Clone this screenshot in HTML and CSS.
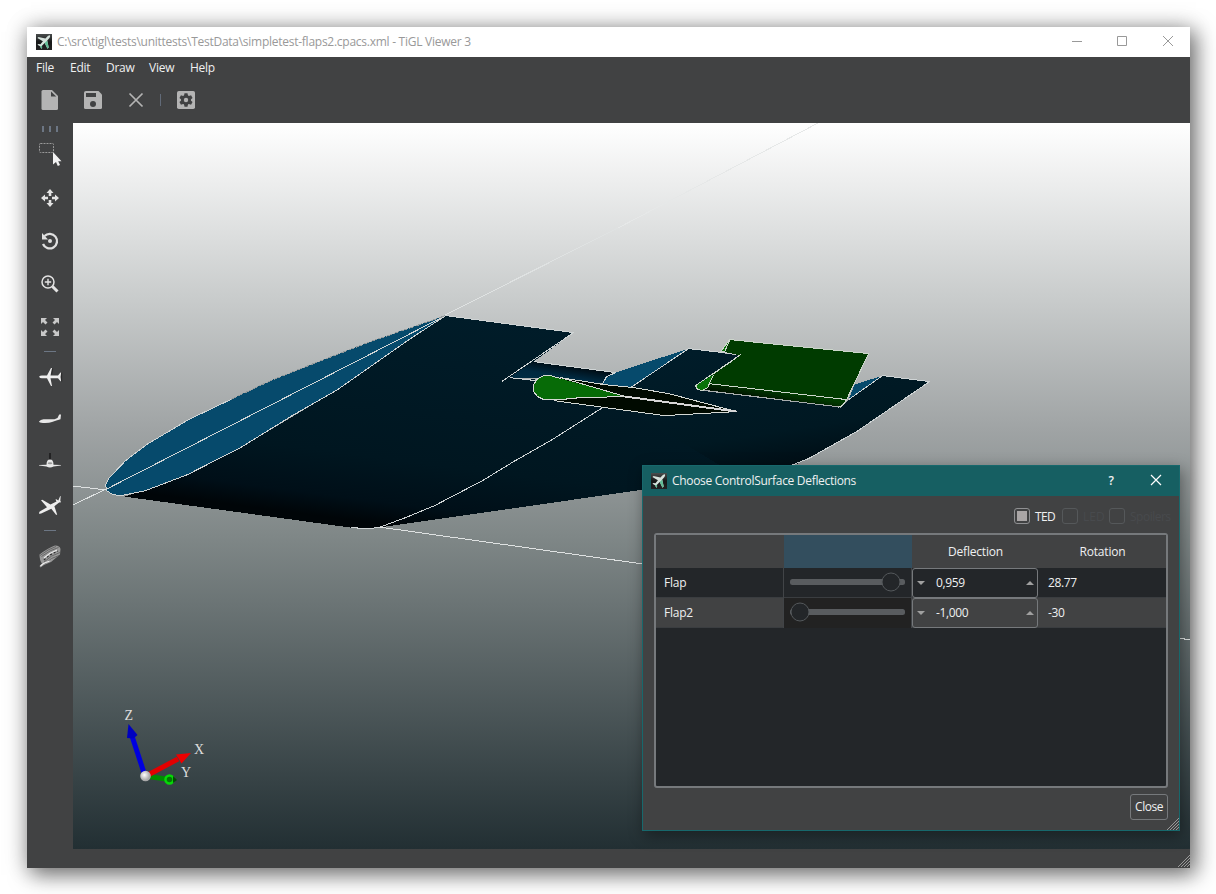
FILE: index.html
```html
<!DOCTYPE html>
<html lang="en">
<head>
<meta charset="utf-8">
<title>TiGL Viewer 3</title>
<link rel="stylesheet" href="styles.css">
</head>
<body>
<svg class="defs" width="0" height="0">
  <defs>
    <linearGradient id="appbg" x1="0" y1="0" x2="0" y2="1"><stop offset="0" stop-color="#4a4d4d"/><stop offset=".5" stop-color="#161818"/><stop offset="1" stop-color="#222"/></linearGradient>
    <symbol id="app" viewBox="0 0 16 16">
      <rect width="16" height="16" fill="url(#appbg)"/>
      <path d="M13.800 1.200C13 .9 12 1.700 10.900 2.900L9.400 4.500 2.500 3 1.400 4 6.900 7.200 4.500 10.200 2.300 10 1.500 10.800 4 12.200 5.300 14.800 6.100 14 6 11.700 8.700 9 11.500 14.800 12.700 13.600 11.200 6.500 12.600 4.900C13.900 3.500 14.500 2 13.800 1.200Z" fill="#d5e2dc"/>
      <path d="M8.700 9 11.500 14.800 12.700 13.600 11.200 6.500M4 12.200 5.300 14.800 6.100 14 6 11.700Z" fill="#62bd96"/>
    </symbol>
  </defs>
</svg>
<main class="window">
  <header class="titlebar">
    <svg class="app-icon"><use href="#app"/></svg>
    <span class="title">C:\src\tigl\tests\unittests\TestData\simpletest-flaps2.cpacs.xml - TiGL Viewer 3</span>
    <svg class="controls" viewBox="0 0 120 30" fill="none" stroke="#999"><path d="M9 14.500h10M54.500 9.500h9v9h-9zM100 9l10 10M110 9l-10 10"/></svg>
  </header>
  <nav class="menu"><span class="m1">File</span><span class="m2">Edit</span><span class="m3">Draw</span><span class="m4">View</span><span>Help</span></nav>
  <div class="toolbar">
    <svg viewBox="0 0 28 28"><path d="M7 4h9l6 6v12.500q0 1.500-1.500 1.500H7Q5.500 24 5.500 22.500V5.500Q5.500 4 7 4z" fill="#b4b4b4"/><path d="M15 5.500v5h5.200" fill="#414243"/></svg>
    <svg viewBox="0 0 28 28"><path d="M7 5h12.500l3.500 3.500V21.500Q23 23 21.500 23H6.500Q5 23 5 21.500V6.500Q5 5 7 5z" fill="#b4b4b4"/><path d="M7 7h10v4H7z" fill="#414243"/><circle cx="14" cy="18" r="3" fill="#414243"/></svg>
    <svg viewBox="0 0 28 28"><path d="M7.500 7.500l13 13M20.500 7.500l-13 13" stroke="#b4b4b4" stroke-width="1.700"/></svg>
    <i class="vsep"></i>
    <svg viewBox="0 0 28 28"><rect x="5" y="5" width="18" height="18" rx="1.800" fill="#b4b4b4"/><g fill="#414243"><circle cx="14" cy="14" r="5"/><path id="t" d="M12.500 7.300h3l.6 3h-4.200zM12.500 20.700h3l.6-3h-4.200z"/><use href="#t" transform="rotate(60 14 14)"/><use href="#t" transform="rotate(120 14 14)"/></g><circle cx="14" cy="14" r="2.200" fill="#b4b4b4"/></svg>
  </div>
  <div class="body">
    <aside class="tools">
      <div class="grip"><i></i><i></i><i></i></div>
      <svg viewBox="0 0 28 28"><rect x="3.500" y="2.500" width="14" height="9" rx="1" fill="none" stroke="#999" stroke-dasharray="2 1"/><path d="M17 11v12.500l3-2.500 1.800 4 2.200-1-1.800-3.800H25.500z" fill="#f2f2f2"/></svg>
      <svg viewBox="0 0 28 28"><path id="arr" d="M14 5l3.500 4h-2.200v3h-2.600v-3h-2.200z" fill="#e3e3e3"/><use href="#arr" transform="rotate(90 14 14)"/><use href="#arr" transform="rotate(180 14 14)"/><use href="#arr" transform="rotate(270 14 14)"/></svg>
      <svg viewBox="0 0 28 28"><path d="M8.500 9A7.300 7.300 0 1 1 7 17" fill="none" stroke="#e0e0e0" stroke-width="2.300"/><path d="M6 6v6.500h6z" fill="#e0e0e0"/><circle cx="14" cy="14" r="2" fill="#e0e0e0"/></svg>
      <svg viewBox="0 0 28 28"><circle cx="12" cy="12" r="6" fill="none" stroke="#e3e3e3" stroke-width="1.500"/><path d="M12 8.800v6.400M8.800 12h6.400" stroke="#e3e3e3" stroke-width="1.400"/><path d="M16.500 16.500l5 5" stroke="#e3e3e3" stroke-width="3"/></svg>
      <svg viewBox="0 0 28 28"><path id="cor" d="M5 5h6L9 7l2.500 2.500-2 2L7 9 5 11z" fill="#c8c8c8"/><use href="#cor" transform="rotate(90 14 14)"/><use href="#cor" transform="rotate(180 14 14)"/><use href="#cor" transform="rotate(270 14 14)"/></svg>
      <i class="hsep"></i>
      <svg viewBox="0 0 28 28"><path d="M3 13.800q1-1.300 3-1.300h5L15 5h1l-1.500 7.500h7.500L24.500 9.500h.7L24.500 14l.7 4.300h-.7L22 15.300h-7.500L16 23h-1l-4-7.700H6q-2 0-3-1.500z" fill="#eee"/><path d="M25.700 9.500v9M16.700 5.500l-1 6" stroke="#222" stroke-width=".8"/></svg>
      <svg viewBox="0 0 28 28"><path d="M3 15.500q1.500-2 4.500-2.300h11q2-.7 3-1.200L23.200 8.500H25l-.5 4.800q-4 1-8.500 2.700-3 1.300-9 1-4-.5-4-1.500z" fill="#e8e8e8"/></svg>
      <svg viewBox="0 0 28 28"><path d="M14 11V4" stroke="#181818" stroke-width="1.500"/><path d="M3 16l7.500-.2Q10.500 10.500 14 10.500T17.500 15.800L25 16v.6l-7.500.8q-3.500 2-7 0L3 16.600z" fill="#e8e8e8"/><ellipse cx="14" cy="14.200" rx="2.300" ry="1" fill="#999"/></svg>
      <svg viewBox="0 0 28 28"><path d="M3 21.500q-.3-1.500 2-2.700l6-3.500L5 8.300 6.300 7.800l8.200 4.800 6-3-1-2 .8-.3 2 1.200L24.200 4l.5.300-.4 4.400.8 1.500-2 .4-4.700 3.700 2.800 8.500-1.200-.1-4.700-6-8.500 4Q4 22.500 3 21.500z" fill="#eee"/></svg>
      <i class="hsep"></i>
      <svg viewBox="0 0 28 28"><path d="M3.500 12.500Q12 6 19 3.500q5 0 5.500 3.500l-.5 5.500-9 7.500-7 3-3.500 2.500-1-1.500 2.500-2.500q-2.500-3-2.500-9z" fill="#999"/><path d="M4 13.500q9-7 16-9M5.500 14.500q9-7 17-9M8 20q7-7 16-9.500M9 21.500q6-6 14-8" fill="none" stroke="#5a5a5a" stroke-width=".8"/><path d="M8 18Q14 12 22 9" fill="none" stroke="#2d2d2d" stroke-width="1.300" stroke-dasharray="2 2"/><path d="M8 16Q14 10.500 21 8M4.500 24l3-2.500 6-2.500" fill="none" stroke="#eee" stroke-width="1.100"/></svg>
    </aside>
    <svg class="scene" viewBox="73 123 1117 726">
      <defs>
        <linearGradient id="wing" gradientUnits="userSpaceOnUse" x1="430" y1="310" x2="402" y2="526"><stop offset="0" stop-color="#001c29"/><stop offset=".7" stop-color="#001620"/><stop offset=".9" stop-color="#000f18"/><stop offset="1" stop-color="#000508"/></linearGradient>
        <linearGradient id="right" gradientUnits="userSpaceOnUse" x1="700" y1="350" x2="720" y2="480"><stop offset="0" stop-color="#001c29"/><stop offset=".7" stop-color="#001822"/><stop offset="1" stop-color="#000d14"/></linearGradient>
        <linearGradient id="gap" gradientUnits="userSpaceOnUse" x1="562" y1="364" x2="559" y2="383"><stop offset="0" stop-color="#000c14"/><stop offset=".6" stop-color="#002940"/><stop offset="1" stop-color="#002c43"/></linearGradient>
        <linearGradient id="lip" gradientUnits="userSpaceOnUse" x1="777" y1="390" x2="775" y2="401"><stop offset="0" stop-color="#003b00"/><stop offset="1" stop-color="#001300"/></linearGradient>
        <radialGradient id="ball" cx=".4" cy=".4"><stop offset="0" stop-color="#fff"/><stop offset="1" stop-color="#aaa"/></radialGradient>
      </defs>
      <g fill="none" stroke="#dfe2e2" shape-rendering="crispEdges">
        <path d="M445 315L618 228" /><path d="M618 228L820 122" stroke="#e6e8e8"/>
        <path d="M73 486l33 4M73 505l33-16M372 526l271 38M1179 638l11 2"/>
      </g>
      <g shape-rendering="crispEdges" stroke-linejoin="round" transform="translate(.6 .6)">
        <path fill="url(#wing)" d="M445 315L573 332 533 361 509 377 640 387 688 348 740 355 711 375 700 390 840 407 882 375 929 381 856 431 808 458 790 466 643 489 378 527 367 528 350 527 124 496 187 474 240 447 337 389 407 340Z"/>
        <path fill="url(#right)" d="M629 386L688 348 740 355 711 375 700 390 840 407 848 399 882 375 929 381 856 431 808 458 790 466 735 474 620 405Z"/>
        <path fill="url(#gap)" d="M533 361L615 372 602 383 560 378 509 377Z"/>
        <path fill="#064a6c" d="M106 490L105.500 484 108 478 125 460 146 444 188 419 230 399 270 380 318 361 370 341 410 327 445 315 407 340 337 389 290 416 240 447 187 474 145 490 120 495 112 494Z"/>
        <path fill="#064a6c" d="M688 348L615 372 606 377 602 384 630 387ZM882 375L854 384 848 399Z"/>
        <path fill="none" stroke="#cfd4d5" d="M445 315L407 340 337 389 290 416 240 447 187 474 145 490 120 495 112 494 106 490 105 484 108 478 125 460 146 444 188 419 230 399M105 489L445 315M445 315L573 332M573 332L501 381M509 377L535 380M533 361L615 372M615 372L606 376 602 383M630 387L688 348 740 354 711 375M848 399L882 375 929 381 856 431 808 458 790 465M602 407L550 440 513 461 482 480 434 505 405 517 378 527 367 528 350 527"/>
        <path fill="none" stroke="#92999b" stroke-dasharray="6 2" d="M230 399L270 380 318 361 370 341 445 315"/>
        <path fill="#003b00" d="M729 339L868 353 846 399 709 383 711 375 740 355 723 351Z"/>
        <path fill="url(#lip)" d="M709 383L846 399 840 406 702 389Z"/>
        <path fill="#087208" d="M729 340L720 350 724 351ZM713 374L695 385 697 389 702 390 707 387Z"/>
        <path fill="none" stroke="#ccd6cb" d="M720 351L729 339 868 353 846 399 842 405 837 407M724 351L729 340M708 383L846 399M740 354L695 385 697 389 702 390 707 387 713 374M720 351h4"/>
        <path fill="#000a00" d="M553 376L603 384 633 387 668 393 736 411 664 415 555 400Z"/>
        <path fill="#076b07" d="M533 384L537 378 543 375 550 375 560 378 625 396 580 397 560 399 543 399 537 396 533 391Z"/>
        <path fill="none" stroke="#d4d8d3" d="M560 378L550 375 543 375 537 378 533 384 533 391 537 396 543 399 560 399 580 397 625 396 560 377 603 384 633 387 668 393 736 411 664 415 553 400"/>
        <path stroke="#d6d6d6" stroke-width="2" fill="none" d="M625 396L736 411"/>
      </g>
      <g>
        <path d="M145 776L132 736" stroke="#0000df" stroke-width="5"/><path d="M128.500 724l9 11-4 3.500-6.500-.5z" fill="#0000c0"/>
        <path d="M145 776l28 4" stroke="#008c00" stroke-width="5"/><circle cx="169.500" cy="779.500" r="4" fill="#087508" stroke="#06d806" stroke-width="2.500"/><path d="M173 776l4 4-4 3z" fill="#024d02"/>
        <path d="M146 776l32-17" stroke="#e30000" stroke-width="5"/><path d="M191 753l-9.500 10.500-5.500-9z" fill="#e00"/>
        <circle cx="145.500" cy="776" r="5.300" fill="url(#ball)"/>
        <g class="axis"><text x="124.500" y="720">Z</text><text x="194" y="754">X</text><text x="181" y="777">Y</text></g>
      </g>
    </svg>
  </div>
  <footer class="status"><svg class="size" viewBox="0 0 12 12"><path d="M0 12L12 0M3 12l9-9M6 12l6-6M9 12l3-3"/></svg></footer>

  <section class="dialog">
    <header class="dlg-title">
      <svg class="app-icon"><use href="#app"/></svg><span>Choose ControlSurface Deflections</span><b>?</b>
      <svg class="x" viewBox="0 0 12 12"><path d="M1 1l10 10M11 1L1 11" stroke="#fff" stroke-width="1.200"/></svg>
    </header>
    <div class="checks"><i class="box on"></i><span class="ted">TED</span><i class="box"></i><span class="led">LED</span><i class="box"></i><span class="spl">Spoilers</span></div>
    <div class="table">
      <div class="row head"><span></span><span class="sel"></span><span>Deflection</span><span>Rotation</span></div>
      <div class="row">
        <span class="name">Flap</span>
        <span class="slide"><svg viewBox="0 0 127 29"><rect x="6" y="11" width="115" height="6" rx="2.500" fill="#595c5f"/><circle cx="107" cy="14" r="9" fill="#232629" stroke="#54585b"/></svg></span>
        <span class="spin"><i class="down"></i><em>0,959</em><i class="up"></i></span><span class="val">28.77</span>
      </div>
      <div class="row alt">
        <span class="name">Flap2</span>
        <span class="slide"><svg viewBox="0 0 127 29"><rect x="6" y="11" width="115" height="6" rx="2.500" fill="#595c5f"/><circle cx="16" cy="14" r="9" fill="#232629" stroke="#54585b"/></svg></span>
        <span class="spin"><i class="down"></i><em>-1,000</em><i class="up"></i></span><span class="val">-30</span>
      </div>
    </div>
    <div class="actions"><button>Close</button></div>
    <svg class="size" viewBox="0 0 12 12"><path d="M0 12L12 0M3 12l9-9M6 12l6-6M9 12l3-3"/></svg>
  </section>
</main>
</body>
</html>
```
FILE: styles.css
```css
* { box-sizing: border-box; }
html, body { height: 100%; }
body { margin: 0; padding: 27px 26px 26px 27px; background: #fff; overflow: hidden; font: 12px/16px "Open Sans", "Noto Sans", sans-serif; color: #eff0f1; }
.defs { position: absolute; }
.window { position: relative; width: 1163px; height: 841px; background: #414243; display: flex; flex-direction: column; box-shadow: 5px 6px 20px 1px rgba(0,0,0,.5), 0 0 22px rgba(0,0,0,.2); }
.titlebar { height: 30px; flex: none; background: #fff; color: #999; display: flex; align-items: center; padding-left: 9px; }
.app-icon { width: 16px; height: 16px; flex: none; }
.title { margin-left: 5px; white-space: nowrap; letter-spacing: -.26px; }
.controls { width: 120px; height: 30px; margin-left: auto; margin-right: 7px; }
.menu { height: 22px; flex: none; display: flex; align-items: center; padding-left: 9px; letter-spacing: -.25px; }
.m1 { width: 34px; } .m2 { width: 36px; } .m3 { width: 43px; } .m4 { width: 41px; }
.toolbar { height: 44px; flex: none; display: flex; align-items: center; padding: 0 0 2px 9px; gap: 15px; }
.toolbar svg { width: 28px; height: 28px; }
.vsep { width: 1px; height: 12px; background: #616a78; margin: 0 -4px 0 -5px; }
.body { display: flex; height: 726px; flex: none; }
.tools { width: 46px; display: flex; flex-direction: column; align-items: center; }
.tools svg { width: 28px; height: 28px; margin: 8px 0 7px; flex: none; }
.grip { height: 10px; flex: none; display: flex; gap: 5px; padding-top: 3px; }
.grip i { width: 2px; height: 6px; background: #6c7684; }
.hsep { width: 12px; height: 1px; flex: none; background: #6c7684; margin: 3px 0; }
.scene { width: 1117px; height: 726px; background: linear-gradient(#fff, #c9cccc 24%, #a0a4a5 42%, #7f8787 57%, #222f33); }
.axis { font: 14px "Liberation Serif", serif; fill: #ddd; }
.status { height: 18px; display: flex; justify-content: flex-end; align-items: flex-end; }
.size { width: 12px; height: 12px; fill: none; stroke: #999; stroke-width: 1; }
.dialog { position: absolute; left: 615px; top: 438px; width: 538px; height: 366px; border: 1px solid #17686c; background: #414243; box-shadow: 2px 4px 14px rgba(0,0,0,.4); display: flex; flex-direction: column; }
.dlg-title { height: 30px; flex: none; background: #165f62; display: flex; align-items: center; padding: 0 17px 0 8px; }
.dlg-title span { margin-left: 5px; letter-spacing: -.31px; }
.dlg-title b { margin-left: auto; font-weight: 600; }
.x { width: 12px; height: 12px; margin: -2px 0 0 36px; }
.checks { height: 37px; flex: none; display: flex; align-items: center; padding: 2px 11px 0 0; justify-content: flex-end; }
.box { width: 16px; height: 16px; flex: none; border: 1px solid #55585a; border-radius: 3px; }
.box.on { border-color: #8f9092; padding: 2px; background: #aaa6a6 content-box; }
.checks span { padding-top: 2px; }
.ted { width: 20px; margin: 0 7px 0 5px; letter-spacing: -.6px; }
.led, .spl { color: #484a4d; }
.led { width: 26px; margin-left: 5px; }
.spl { width: 38px; margin-left: 5px; letter-spacing: -.5px; }
.table { width: 514px; height: 255px; flex: none; margin-left: 11px; border: 2px solid #76797c; border-radius: 3px; background: #232629; overflow: hidden; }
.row { display: grid; grid-template-columns: 128px 128px 127px 127px; height: 30px; align-items: stretch; border-bottom: 1px solid #3a3d40; }
.head { height: 33px; background: #414243; border: 0; letter-spacing: -.2px; }
.head span { display: flex; align-items: center; justify-content: center; }
.head .sel { background: #334e5e; }
.name { padding: 7px 8px; border-right: 1px solid #414447; letter-spacing: -.25px; }
.slide { border-right: 1px solid #414447; }
.slide svg { display: block; width: 127px; height: 29px; }
.alt { background: #414243; }
.alt .slide { background: #222; }
.spin { display: flex; align-items: center; border: 1px solid #76797c; border-radius: 3px; padding: 0 3px 0 4px; margin-right: 1px; }
.spin em { font-style: normal; margin-left: 11px; flex: 1; letter-spacing: -.35px; }
.down, .up { border: 4px solid transparent; }
.down { border-top-color: #a0a0a0; border-bottom: 0; }
.up { border-bottom-color: #a0a0a0; border-top: 0; }
.val { padding: 7px 9px; letter-spacing: -.4px; }
.actions { display: flex; justify-content: flex-end; padding: 6px 11px 0 0; }
button { width: 38px; height: 26px; padding: 0; border: 1px solid #76797c; border-radius: 3px; background: #414243; color: #eff0f1; font: inherit; letter-spacing: -.5px; }
.dialog > .size { position: absolute; right: 0; bottom: 0; }
```
